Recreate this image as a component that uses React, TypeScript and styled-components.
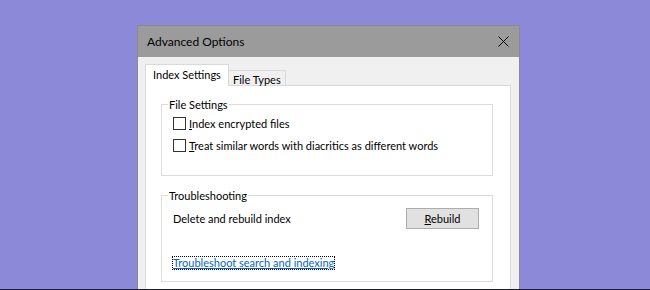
import React from 'react';
import styled, { createGlobalStyle } from 'styled-components';

const Global = createGlobalStyle`
  html, body { margin: 0; padding: 0; }
  body {
    width: 650px;
    height: 290px;
    overflow: hidden;
    background: #8d89d9;
    font-family: "Segoe UI", Lato, "Noto Sans", sans-serif;
    font-size: 11px;
    color: #000;
  }
`;

const Page = styled.div`
  width: 650px;
  height: 290px;
  box-sizing: border-box;
  padding: 25px 0 0 137px;
  overflow: hidden;
  border-bottom: 1px solid #1c1c30;
`;

const Dialog = styled.div`
  width: 383px;
  height: 300px;
  box-sizing: border-box;
  border: 1px solid #8a8a8a;
  display: flex;
  flex-direction: column;
  background: #f0f0f0;
`;

const TitleBar = styled.div`
  height: 31px;
  flex: none;
  background: #9b9b9b;
  display: flex;
  align-items: center;
  justify-content: space-between;
  padding: 0 10px 0 9px;
  font-size: 12px;
`;

const CloseIcon = styled.svg`
  width: 11px;
  height: 11px;
  display: block;
`;

const Body = styled.div`
  flex: 1;
  padding: 7px 8px 0 7px;
  display: flex;
  flex-direction: column;
`;

const Tabs = styled.div`
  display: flex;
  align-items: flex-end;
  height: 21px;
`;

const Tab = styled.div<{ $active?: boolean }>`
  box-sizing: border-box;
  display: flex;
  align-items: center;
  border: 1px solid #d9d9d9;
  border-bottom: none;
  position: relative;
  z-index: 1;
  ${({ $active }) =>
    $active
      ? `height: 22px; margin-bottom: -1px; width: 84px; background: #fff; padding: 0 0 2px 7px;`
      : `height: 15px; width: 57px; background: #f0f0f0; border-left: none; padding: 2px 0 0 4px;`}
`;

const Panel = styled.div`
  flex: 1;
  background: #fff;
  border: 1px solid #d9d9d9;
  padding: 11px 17px 0 15px;
  display: flex;
  flex-direction: column;
  gap: 12px;
`;

const Group = styled.fieldset<{ $pb: number }>`
  margin: 0;
  border: 1px solid #dcdcdc;
  padding: 0 13px ${({ $pb }) => $pb}px 11px;
  min-width: 0;
`;

const Legend = styled.legend`
  margin-left: -5px;
  padding: 0 1px;
  line-height: 15px;
`;

const CheckRow = styled.label`
  display: flex;
  align-items: center;
  height: 22px;
  gap: 3px;
`;

const Box = styled.span`
  width: 13px;
  height: 13px;
  box-sizing: border-box;
  border: 1px solid #333;
  background: #fff;
  flex: none;
`;

const Key = styled.span`
  text-decoration: underline;
  text-underline-offset: 1px;
`;

const ActionRow = styled.div`
  display: flex;
  align-items: center;
  justify-content: space-between;
  padding-top: 5px;
`;

const Button = styled.button`
  width: 73px;
  height: 21px;
  box-sizing: border-box;
  background: #e1e1e1;
  border: 1px solid #adadad;
  font: inherit;
  color: #000;
  padding: 0;
`;

const LinkRow = styled.div`
  display: flex;
  padding-top: 28px;
`;

const Link = styled.a`
  color: #0066cc;
  text-decoration: underline;
  outline: 1px dotted #000;
  line-height: 12px;
  height: 12px;
  cursor: pointer;
`;

export default function App() {
  return (
    <>
      <Global />
      <Page>
        <Dialog>
          <TitleBar>
            <span>Advanced Options</span>
            <CloseIcon viewBox="0 0 11 11">
              <path d="M0.5 0.5 L10.5 10.5 M10.5 0.5 L0.5 10.5" stroke="#000" strokeWidth="1" fill="none" />
            </CloseIcon>
          </TitleBar>
          <Body>
            <Tabs>
              <Tab $active>Index Settings</Tab>
              <Tab>File Types</Tab>
            </Tabs>
            <Panel>
              <Group $pb={19}>
                <Legend>File Settings</Legend>
                <CheckRow>
                  <Box />
                  <span><Key>I</Key>ndex encrypted files</span>
                </CheckRow>
                <CheckRow>
                  <Box />
                  <span><Key>T</Key>reat similar words with diacritics as different words</span>
                </CheckRow>
              </Group>
              <Group $pb={12}>
                <Legend>Troubleshooting</Legend>
                <ActionRow>
                  <span>Delete and rebuild index</span>
                  <Button><Key>R</Key>ebuild</Button>
                </ActionRow>
                <LinkRow>
                  <Link>Troubleshoot search and indexing</Link>
                </LinkRow>
              </Group>
            </Panel>
          </Body>
        </Dialog>
      </Page>
    </>
  );
}
